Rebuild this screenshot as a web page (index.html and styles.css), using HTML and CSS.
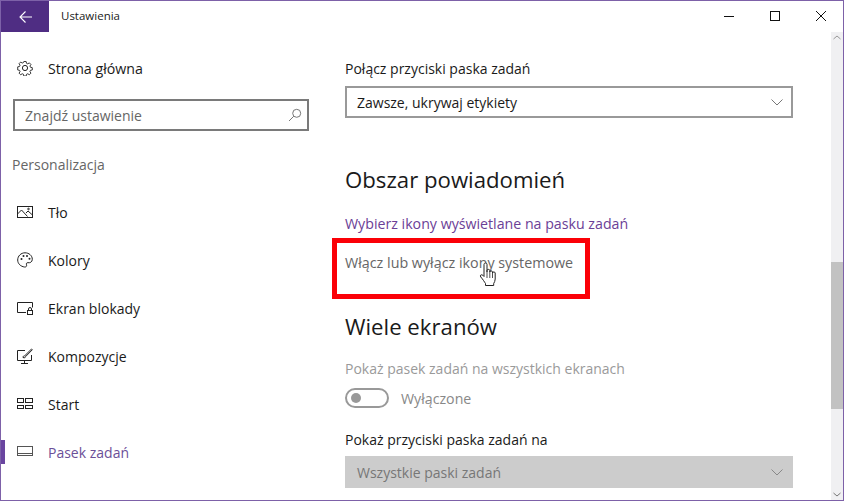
FILE: index.html
```html
<!DOCTYPE html>
<html lang="pl">

<head>
    <meta charset="UTF-8">
    <meta name="viewport" content="width=device-width, initial-scale=1.0">
    <title>Ustawienia</title>
    <link rel="stylesheet" href="styles.css">
</head>

<body>
    <div class="window">
        <div class="titlebar">
            <div class="back">
                <svg width="13" height="12" viewBox="0 0 13 12"><path d="M13 6H1M6.500 .5L1 6l5.500 5.500" fill="none" stroke="#fff" stroke-width="1.100"/></svg>
            </div>
            <span class="title">Ustawienia</span>
            <div class="controls">
                <svg class="ctl" width="46" height="31" viewBox="0 0 46 31"><path d="M18 15.500h10" stroke="#111" stroke-width="1"/></svg>
                <svg class="ctl" width="46" height="31" viewBox="0 0 46 31"><rect x="18.500" y="10.500" width="9" height="9" fill="none" stroke="#111" stroke-width="1"/></svg>
                <svg class="ctl" width="46" height="31" viewBox="0 0 46 31"><path d="M18 10l10 10M28 10L18 20" stroke="#111" stroke-width="1"/></svg>
            </div>
        </div>

        <div class="main">
            <div class="sidebar">
                <div class="nav home">
                    <svg class="ico" width="16" height="16" viewBox="0 0 16 16"><g fill="none" stroke="#222" stroke-width="1"><circle cx="8" cy="8" r="2.600"/><path d="M6.700 .8h2.600l.4 2 1.400.6 1.700-1.100 1.800 1.800-1.100 1.700.6 1.400 2 .4v2.600l-2 .4-.6 1.400 1.100 1.700-1.800 1.800-1.700-1.100-1.400.6-.4 2H6.700l-.4-2-1.400-.6-1.700 1.100-1.800-1.800 1.100-1.700-.6-1.400-2-.4V6.700l2-.4.6-1.400-1.100-1.700 1.800-1.800 1.700 1.100 1.400-.6z" transform="translate(.8 .8) scale(.9)"/></g></svg>
                    <span>Strona główna</span>
                </div>
                <div class="search">
                    <span>Znajdź ustawienie</span>
                    <svg width="14" height="14" viewBox="0 0 14 14"><g fill="none" stroke="#777" stroke-width="1"><circle cx="8.700" cy="5.300" r="4"/><path d="M5.800 8.200L1 13"/></g></svg>
                </div>
                <div class="section">Personalizacja</div>
                <div class="nav">
                    <svg class="ico" width="16" height="16" viewBox="0 0 16 16"><g fill="none" stroke="#222" stroke-width="1"><rect x=".5" y="2.500" width="15" height="11"/><path d="M.5 10l4-4 6 6.500M9 9l2-2 4.500 4"/><circle cx="11.500" cy="5" r=".8"/></g></svg>
                    <span>Tło</span>
                </div>
                <div class="nav">
                    <svg class="ico" width="16" height="16" viewBox="0 0 16 16"><g fill="none" stroke="#222" stroke-width="1"><path d="M8 .8c4 0 7.300 2.800 7.300 6.500 0 3-2.500 3.700-4.300 3.400-1.500-.2-2 1-1.500 2.100.5 1.300-.4 2.400-2 2.200C3.800 14.500.7 11.800.7 8 .7 4 4 .8 8 .8z"/></g><g fill="#222"><circle cx="4.500" cy="7" r="1"/><circle cx="6.500" cy="4" r="1"/><circle cx="10" cy="4" r="1"/><circle cx="12.500" cy="6.800" r="1"/></g></svg>
                    <span>Kolory</span>
                </div>
                <div class="nav">
                    <svg class="ico" width="16" height="16" viewBox="0 0 16 16"><g fill="none" stroke="#222" stroke-width="1"><path d="M9 12.500H.5V2.500h15v5"/><rect x="10.500" y="10.500" width="5" height="4"/><path d="M11.500 10.500V9a1.500 1.500 0 0 1 3 0v1.500"/></g></svg>
                    <span>Ekran blokady</span>
                </div>
                <div class="nav">
                    <svg class="ico" width="16" height="16" viewBox="0 0 16 16"><g fill="none" stroke="#222" stroke-width="1"><path d="M8 2.500H.5v10h14V7M7.500 12.500v2.500M4 15.500h7"/><path d="M6 9.500c0-1.500 1-1.800 1.800-1.800L14.500 1l.8.8-6.700 6.800c0 1-1 1.500-2.600.9z"/></g></svg>
                    <span>Kompozycje</span>
                </div>
                <div class="nav">
                    <svg class="ico" width="16" height="16" viewBox="0 0 16 16"><g fill="none" stroke="#222" stroke-width="1"><rect x=".5" y="2.500" width="6" height="4"/><rect x="8.500" y="2.500" width="7" height="4"/><rect x=".5" y="9.500" width="6" height="3"/><rect x="8.500" y="9.500" width="7" height="3"/></g></svg>
                    <span>Start</span>
                </div>
                <div class="nav active">
                    <svg class="ico" width="16" height="16" viewBox="0 0 16 16"><g fill="none" stroke="#555" stroke-width="1"><rect x=".5" y="2.500" width="15" height="9"/><path d="M.5 9.500h15"/></g></svg>
                    <span>Pasek zadań</span>
                </div>
            </div>

            <div class="content">
                <label class="field-label">Połącz przyciski paska zadań</label>
                <div class="select">
                    <span>Zawsze, ukrywaj etykiety</span>
                    <svg width="12" height="7" viewBox="0 0 12 7"><path d="M.5 .5L6 6l5.500-5.500" fill="none" stroke="#777" stroke-width="1"/></svg>
                </div>

                <h2 class="head-first">Obszar powiadomień</h2>
                <a class="link">Wybierz ikony wyświetlane na pasku zadań</a>
                <a class="link hover">Włącz lub wyłącz ikony systemowe</a>

                <h2 class="head-second">Wiele ekranów</h2>
                <label class="field-label disabled">Pokaż pasek zadań na wszystkich ekranach</label>
                <div class="toggle-row">
                    <div class="toggle"><i></i></div>
                    <span>Wyłączone</span>
                </div>
                <label class="field-label last">Pokaż przyciski paska zadań na</label>
                <div class="select off">
                    <span>Wszystkie paski zadań</span>
                    <svg width="12" height="7" viewBox="0 0 12 7"><path d="M.5 .5L6 6l5.500-5.500" fill="none" stroke="#888" stroke-width="1"/></svg>
                </div>
            </div>

            <div class="scrollbar">
                <svg width="12" height="12" viewBox="0 0 12 12"><path d="M2.500 7L6 4l3.500 3" fill="none" stroke="#999" stroke-width="1"/></svg>
                <div class="track"><div class="thumb"></div></div>
                <svg width="12" height="12" viewBox="0 0 12 12"><path d="M2.500 5L6 8l3.500-3" fill="none" stroke="#777" stroke-width="1"/></svg>
            </div>
        </div>

        <!-- zaznaczenie i kursor lezace nad trescia -->
        <div class="redbox"></div>
        <svg class="cursor" width="20" height="26" viewBox="0 0 20 26"><path d="M5 2.500c0-2 3-2 3 0V10V8.500c0-1.500 2.800-1.500 2.800 0V10c0-1.500 2.700-1.500 2.700 0v1c0-1.400 2.700-1.400 2.700 0v6c0 2-.8 3-1.500 4.500v2H6.500v-2C5.500 20 4 17.500 1.800 15c-1.300-1.500.5-3 2-1.800L5 14.500z" fill="#fff" stroke="#222" stroke-width="1" stroke-linejoin="round"/><path d="M8 10v6M10.800 10v6M13.500 11v5" stroke="#222" stroke-width=".8" fill="none"/></svg>
    </div>
</body>

</html>
```

FILE: styles.css
```css
* {
    padding: 0;
    margin: 0;
    box-sizing: border-box;
}

body {
    width: 844px;
    height: 501px;
    overflow: hidden;
    background: #fff;
    font-family: "Open Sans", "Liberation Sans", sans-serif;
    font-size: 14px;
    color: #1a1a1a;
}

.window {
    position: relative;
    width: 844px;
    height: 501px;
    border: 1px solid #7d61a8;
    display: flex;
    flex-direction: column;
}

.titlebar {
    height: 31px;
    display: flex;
    align-items: center;
}

.back {
    width: 48px;
    height: 31px;
    background: #4f2d83;
    display: flex;
    align-items: center;
    justify-content: center;
}

.title {
    margin-left: 12px;
    margin-bottom: 2px;
    font-size: 11.500px;
    color: #222;
}

.controls {
    margin-left: auto;
    display: flex;
    margin-right: -1px;
}

.main {
    flex: 1;
    display: flex;
    min-height: 0;
}

.sidebar {
    width: 320px;
    padding-top: 12px;
}

.nav {
    height: 48px;
    display: flex;
    align-items: center;
    position: relative;
    padding-left: 16px;
}

.nav .ico {
    margin-right: 15px;
    flex: none;
}

.home span {
    font-size: 14.200px;
}

.nav.active {
    color: #6b4f98;
}

.nav.active::before {
    content: "";
    position: absolute;
    left: 0;
    top: 12px;
    width: 4px;
    height: 24px;
    background: #6a45a0;
}

.search {
    margin: 7px 12px 0 12px;
    width: 296px;
    height: 32px;
    border: 2px solid #7a7a7a;
    display: flex;
    align-items: center;
    justify-content: space-between;
    padding: 0 5px 0 10px;
    color: #666;
}

.section {
    margin: 24px 0 0 11px;
    height: 33px;
    color: #666;
}

.content {
    flex: 1;
    padding: 27px 0 0 24px;
}

.field-label {
    display: block;
    font-size: 14px;
    line-height: 20px;
}

.select {
    margin-top: 7px;
    width: 448px;
    height: 32px;
    border: 2px solid #999;
    display: flex;
    align-items: center;
    justify-content: space-between;
    padding: 0 8px 0 10px;
}

.select.off {
    margin-top: 6px;
    border-color: #ccc;
    background: #ccc;
    color: #777;
}

h2 {
    font-weight: 400;
    font-size: 22.200px;
    line-height: 30px;
}

.head-first {
    margin-top: 47px;
}

.head-second {
    margin-top: 39px;
}

.link {
    display: block;
    line-height: 20px;
    font-size: 14.200px;
    color: #6b4096;
}

.head-first + .link {
    margin-top: 19px;
}

.link.hover {
    margin-top: 19px;
    font-size: 14.300px;
    color: #666;
}

.field-label.disabled {
    margin-top: 17px;
    color: #9a9a9a;
}

.toggle-row {
    margin-top: 9px;
    height: 20px;
    display: flex;
    align-items: center;
    gap: 12px;
    font-size: 14.200px;
    color: #888;
}

.toggle {
    width: 44px;
    height: 20px;
    border: 2px solid #999;
    border-radius: 10px;
    display: flex;
    align-items: center;
    padding-left: 4px;
}

.toggle i {
    width: 10px;
    height: 10px;
    border-radius: 50%;
    background: #999;
}

.field-label.last {
    margin-top: 22px;
}

.scrollbar {
    width: 12px;
    background: #f0f0f2;
    display: flex;
    flex-direction: column;
    margin-left: auto;
}

.track {
    flex: 1;
}

.thumb {
    margin-top: 218px;
    height: 147px;
    background: #c2c2c2;
}

.redbox {
    position: absolute;
    left: 331px;
    top: 237px;
    width: 258px;
    height: 61px;
    border: 5px solid #fb0007;
}

.cursor {
    position: absolute;
    left: 478px;
    top: 261px;
}
```
